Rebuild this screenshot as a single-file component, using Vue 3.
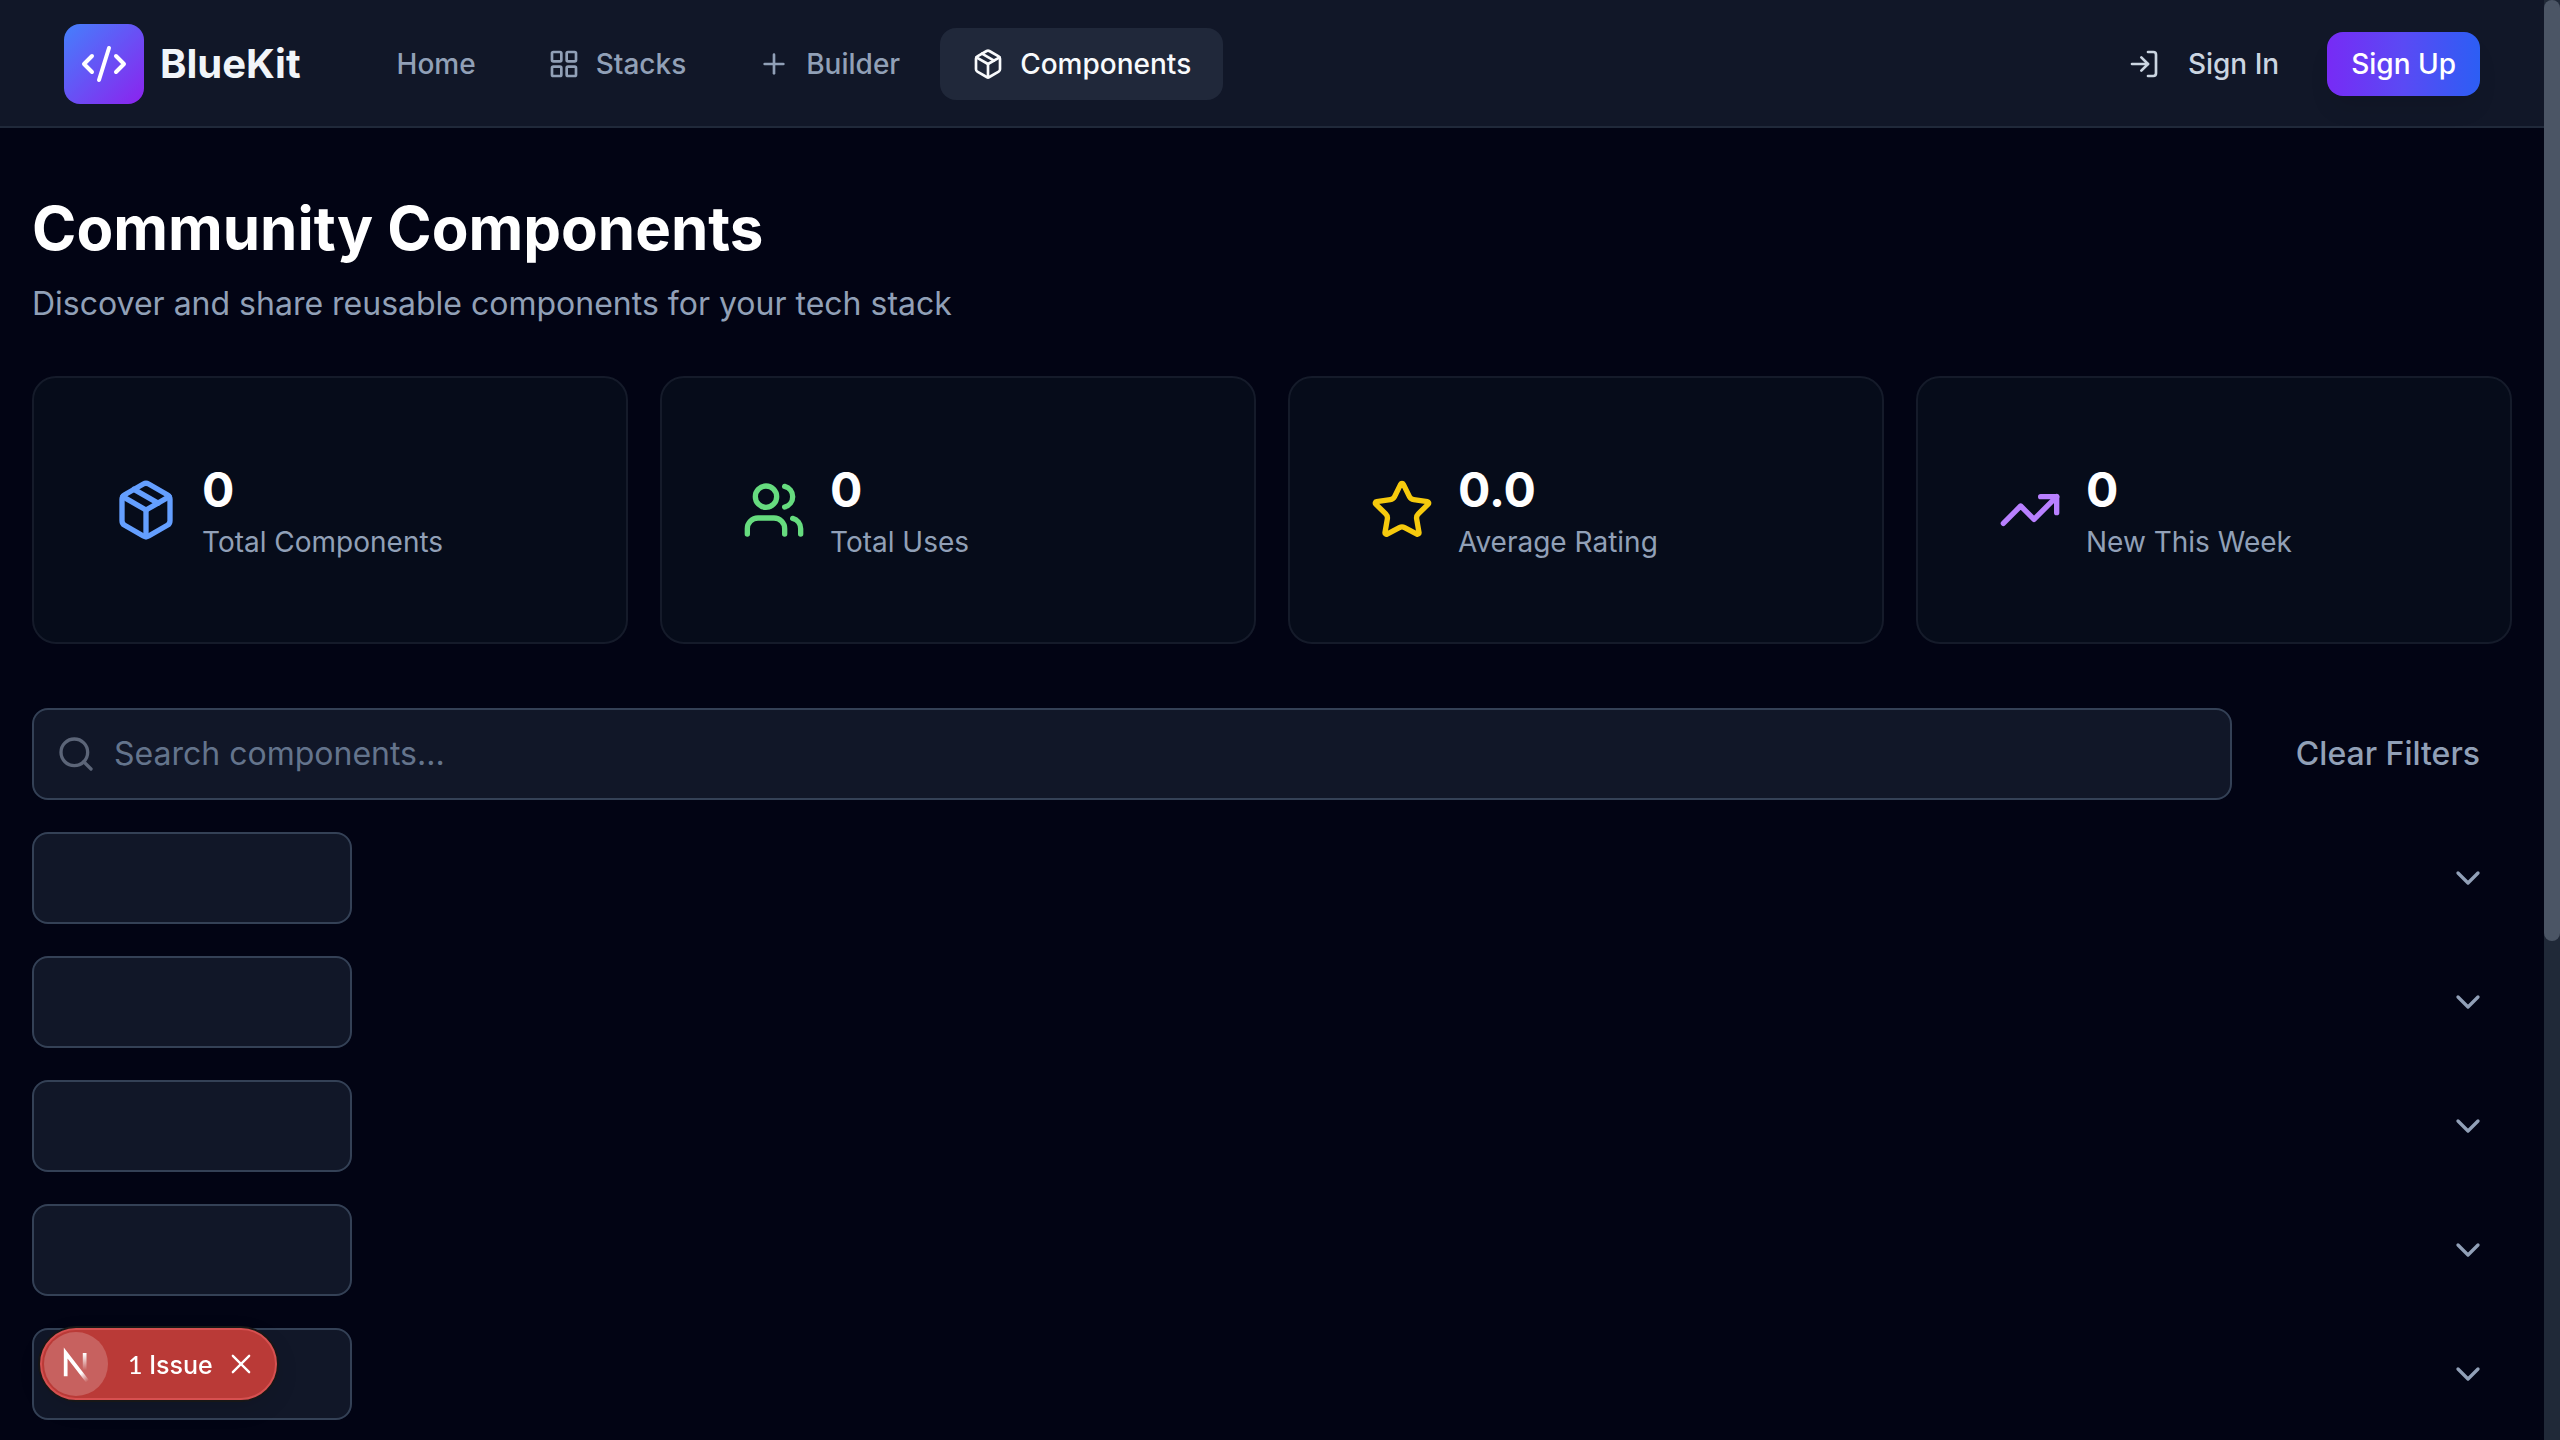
<script setup>
import { ref } from 'vue'

const icons = {
  code: '<path d="m18 16 4-4-4-4"/><path d="m6 8-4 4 4 4"/><path d="m14.5 4-5 16"/>',
  grid: '<rect width="7" height="7" x="3" y="3" rx="1"/><rect width="7" height="7" x="14" y="3" rx="1"/><rect width="7" height="7" x="14" y="14" rx="1"/><rect width="7" height="7" x="3" y="14" rx="1"/>',
  plus: '<path d="M5 12h14"/><path d="M12 5v14"/>',
  box: '<path d="M11 21.73a2 2 0 0 0 2 0l7-4A2 2 0 0 0 21 16V8a2 2 0 0 0-1-1.73l-7-4a2 2 0 0 0-2 0l-7 4A2 2 0 0 0 3 8v8a2 2 0 0 0 1 1.73z"/><path d="M12 22V12"/><path d="M3.29 7 12 12l8.71-5"/><path d="m7.5 4.27 9 5.15"/>',
  login: '<path d="M15 3h4a2 2 0 0 1 2 2v14a2 2 0 0 1-2 2h-4"/><path d="m10 17 5-5-5-5"/><path d="M15 12H3"/>',
  users: '<path d="M16 21v-2a4 4 0 0 0-4-4H6a4 4 0 0 0-4 4v2"/><circle cx="9" cy="7" r="4"/><path d="M22 21v-2a4 4 0 0 0-3-3.87"/><path d="M16 3.13a4 4 0 0 1 0 7.75"/>',
  star: '<path d="M11.525 2.295a.53.53 0 0 1 .95 0l2.31 4.679a2.123 2.123 0 0 0 1.595 1.16l5.166.756a.53.53 0 0 1 .294.904l-3.736 3.638a2.123 2.123 0 0 0-.611 1.878l.882 5.14a.53.53 0 0 1-.771.56l-4.618-2.428a2.122 2.122 0 0 0-1.973 0L6.396 21.01a.53.53 0 0 1-.77-.56l.881-5.139a2.122 2.122 0 0 0-.611-1.879L2.16 9.795a.53.53 0 0 1 .294-.906l5.165-.755a2.122 2.122 0 0 0 1.597-1.16z"/>',
  trend: '<path d="M16 7h6v6"/><path d="m22 7-8.5 8.5-5-5L2 17"/>',
  search: '<path d="m21 21-4.34-4.34"/><circle cx="11" cy="11" r="8"/>',
  chevron: '<path d="m6 9 6 6 6-6"/>',
  close: '<path d="M5 5l14 14"/><path d="M19 5 5 19"/>'
}

const nav = [
  { label: 'Home' },
  { label: 'Stacks', icon: 'grid' },
  { label: 'Builder', icon: 'plus' },
  { label: 'Components', icon: 'box', active: true }
]

const stats = [
  { value: '0', label: 'Total Components', icon: 'box', tone: 'blue' },
  { value: '0', label: 'Total Uses', icon: 'users', tone: 'green' },
  { value: '0.0', label: 'Average Rating', icon: 'star', tone: 'yellow' },
  { value: '0', label: 'New This Week', icon: 'trend', tone: 'purple' }
]

const filters = ['Category', 'Technology', 'Type', 'Rating', 'Sort order']
const query = ref('')
</script>

<template>
  <div class="page">
    <header class="topbar">
      <a class="brand" href="#">
        <span class="brand-mark"><svg class="icon icon-lg" viewBox="0 0 24 24" v-html="icons.code" /></span>
        <span>BlueKit</span>
      </a>
      <nav class="nav">
        <a v-for="item in nav" :key="item.label" href="#" class="nav-link" :class="{ active: item.active }">
          <svg v-if="item.icon" class="icon icon-sm" viewBox="0 0 24 24" v-html="icons[item.icon]" />
          {{ item.label }}
        </a>
      </nav>
      <div class="account">
        <button type="button" class="sign-in">
          <svg class="icon icon-sm" viewBox="0 0 24 24" v-html="icons.login" />
          Sign In
        </button>
        <button type="button" class="sign-up">Sign Up</button>
      </div>
    </header>

    <main class="content">
      <h1>Community Components</h1>
      <p class="subtitle">Discover and share reusable components for your tech stack</p>

      <section class="stats">
        <article v-for="s in stats" :key="s.label" class="stat">
          <svg class="icon icon-xl" :class="s.tone" viewBox="0 0 24 24" v-html="icons[s.icon]" />
          <div>
            <div class="stat-value">{{ s.value }}</div>
            <div class="stat-label">{{ s.label }}</div>
          </div>
        </article>
      </section>

      <section class="filters">
        <div class="search-row">
          <label class="search">
            <svg class="icon icon-md" viewBox="0 0 24 24" v-html="icons.search" />
            <input v-model="query" type="text" placeholder="Search components..." aria-label="Search components" />
          </label>
          <button type="button" class="clear">Clear Filters</button>
        </div>
        <label v-for="f in filters" :key="f" class="filter-row">
          <select :aria-label="f"></select>
          <svg class="icon icon-md" viewBox="0 0 24 24" v-html="icons.chevron" />
        </label>
      </section>
    </main>

    <div class="scroll-track"><div class="scroll-thumb"></div></div>

    <div class="issue-badge">
      <button type="button" class="next-mark" aria-label="Open developer tools">
        <svg viewBox="0 0 32 32" fill="none">
          <g transform="translate(8.5 9.5)">
            <path d="M13.3 15.2 2.34 1v11.6" stroke="url(#n-diagonal)" stroke-width="1.86" />
            <path d="M11.825 1v11.6" stroke="url(#n-stem)" stroke-width="1.86" />
          </g>
          <defs>
            <linearGradient id="n-diagonal" gradientUnits="userSpaceOnUse" x1="9.96" y1="11.12" x2="15.48" y2="17.97">
              <stop stop-color="#fff" />
              <stop offset=".604" stop-color="#fff" stop-opacity="0" />
            </linearGradient>
            <linearGradient id="n-stem" gradientUnits="userSpaceOnUse" x1="11.82" y1="1.4" x2="11.79" y2="9.63">
              <stop stop-color="#fff" />
              <stop offset="1" stop-color="#fff" stop-opacity="0" />
            </linearGradient>
          </defs>
        </svg>
      </button>
      <button type="button" class="issue-text"><span class="count">1</span> Issue</button>
      <button type="button" class="dismiss" aria-label="Dismiss">
        <svg class="icon" viewBox="0 0 24 24" v-html="icons.close" />
      </button>
    </div>
  </div>
</template>

<style>
body {
  margin: 0;
  background: #020414;
}
</style>

<style scoped>
.page {
  box-sizing: border-box;
  min-height: 100vh;
  padding-right: 16px;
  background: #020414;
  color: #fff;
  font-family: Inter, "Liberation Sans", sans-serif;
  font-size: 28px;
  line-height: 40px;
}
a {
  color: inherit;
  text-decoration: none;
}
button {
  padding: 0;
  border: 0;
  background: none;
  color: inherit;
  font: inherit;
  cursor: pointer;
}
.icon {
  display: block;
  flex: none;
  fill: none;
  stroke: currentColor;
  stroke-width: 2;
  stroke-linecap: round;
  stroke-linejoin: round;
}
.icon-sm { width: 32px; height: 32px; }
.icon-md { width: 40px; height: 40px; }
.icon-lg { width: 48px; height: 48px; }
.icon-xl { width: 64px; height: 64px; }

.topbar {
  display: flex;
  align-items: center;
  padding: 24px 64px 22px;
  border-bottom: 2px solid #20293a;
  background: #111728;
}
.brand {
  display: flex;
  align-items: center;
  gap: 16px;
  margin-right: 64px;
  color: #f1f5f9;
  font-size: 40px;
  font-weight: 700;
}
.brand-mark {
  display: grid;
  place-items: center;
  width: 80px;
  height: 80px;
  border-radius: 16px;
  background: linear-gradient(to bottom right, #4480fc, #8c22ee);
  color: #fff;
}
.nav {
  display: flex;
  gap: 8px;
}
.nav-link {
  display: flex;
  align-items: center;
  gap: 16px;
  padding: 16px 32px;
  border-radius: 16px;
  color: #91a0b7;
  font-weight: 500;
}
.nav-link.active {
  background: #20283a;
  color: #f8fafc;
}
.account {
  display: flex;
  align-items: center;
  gap: 48px;
  margin-left: auto;
  font-weight: 500;
}
.sign-in {
  display: flex;
  align-items: center;
  gap: 28px;
  color: #cbd5e1;
}
.sign-up {
  padding: 12px 24px;
  border-radius: 16px;
  background: linear-gradient(to right, #772bf5, #5a4af4 50%, #2c5ef4);
  box-shadow: 0 16px 24px -6px rgb(0 0 0 / 10%);
}

.content {
  padding: 64px 32px 20px;
}
h1 {
  margin: 0 0 16px;
  font-size: 60px;
  line-height: 72px;
  font-weight: 700;
}
.subtitle {
  margin: 0 0 48px;
  color: #91a0b7;
  font-size: 32px;
  line-height: 48px;
}
.stats {
  display: grid;
  grid-template-columns: repeat(4, 1fr);
  gap: 32px;
  margin-bottom: 64px;
}
.stat {
  display: flex;
  align-items: center;
  gap: 24px;
  padding: 80px;
  border: 2px solid #151b2a;
  border-radius: 24px;
  background: #060c1a;
}
.stat-value {
  font-size: 48px;
  line-height: 64px;
  font-weight: 700;
}
.stat-label {
  color: #91a0b7;
}
.blue { color: #649fff; }
.green { color: #66dc7f; }
.yellow { color: #f6ca0d; }
.purple { color: #b880ff; }

.filters {
  display: flex;
  flex-direction: column;
  gap: 32px;
  font-size: 32px;
  line-height: 48px;
}
.search-row {
  display: flex;
  gap: 32px;
}
.search,
select {
  box-sizing: border-box;
  height: 92px;
  border: 2px solid #344156;
  border-radius: 16px;
  background: #111728;
}
.search {
  display: flex;
  flex: 1;
  align-items: center;
  gap: 18px;
  padding: 0 22px;
  color: #5c6578;
}
.search input {
  flex: 1;
  min-width: 0;
  padding: 0;
  border: 0;
  outline: 0;
  background: none;
  color: #fff;
  font: inherit;
}
.search input::placeholder {
  color: #64748c;
  opacity: 1;
}
.clear {
  padding: 0 32px;
  color: #91a0b7;
  font-weight: 500;
}
.filter-row {
  display: flex;
  align-items: center;
  justify-content: space-between;
  padding-right: 24px;
  color: #91a0b7;
}
select {
  width: 320px;
  appearance: none;
}

.scroll-track {
  position: fixed;
  top: 0;
  right: 0;
  bottom: 0;
  width: 16px;
  background: #202938;
}
.scroll-thumb {
  height: 941px;
  border-radius: 8px;
  background: #4b5565;
}

.issue-badge {
  position: fixed;
  left: 40px;
  bottom: 40px;
  display: flex;
  align-items: center;
  padding: 2px 20px 2px 2px;
  border: 2px solid #d65050;
  border-radius: 36px;
  background: #ba3a37;
  box-shadow: 0 0 0 2px #171717, 0 8px 24px rgb(0 0 0 / 10%);
  font-size: 25px;
  line-height: 36px;
  font-weight: 500;
}
.next-mark {
  width: 64px;
  height: 64px;
  border-radius: 50%;
  background: rgb(255 255 255 / 20%);
}
.next-mark svg {
  display: block;
  width: 64px;
  height: 64px;
}
.issue-text {
  margin: 0 14px 0 20px;
}
.count {
  font-family: Lato, Inter, sans-serif;
}
.dismiss .icon {
  width: 28px;
  height: 28px;
}
</style>
